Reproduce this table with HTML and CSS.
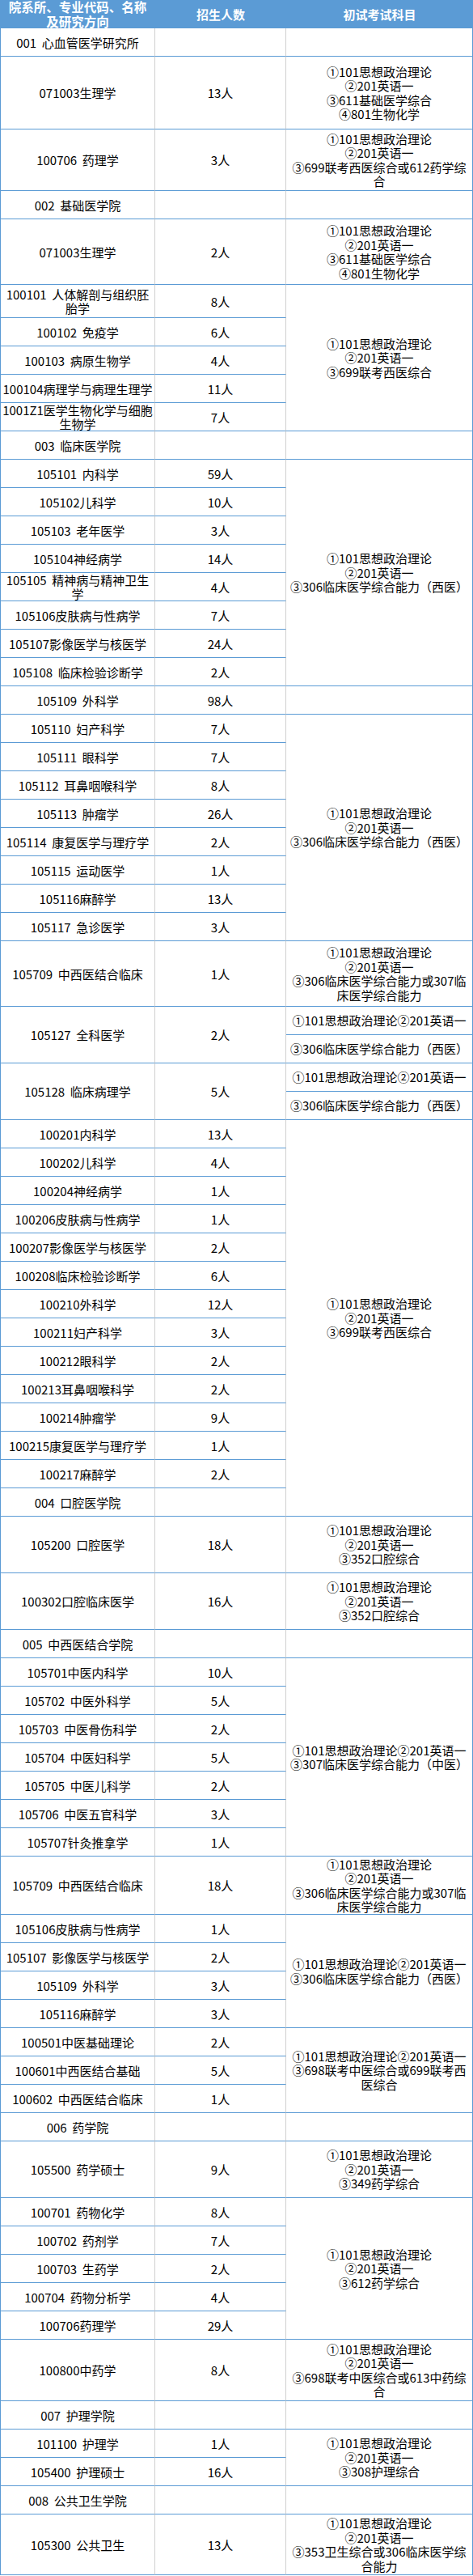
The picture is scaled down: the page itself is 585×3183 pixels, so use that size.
FILE: index.html
```html
<!DOCTYPE html>
<html lang="zh-CN">
<head>
<meta charset="utf-8">
<title>招生目录</title>
<link rel="stylesheet" href="styles.css">
</head>
<body>
<table class="t">
<colgroup><col class="w1"><col class="w2"><col class="w3"></colgroup>
<thead>
<tr class="hd"><th class="h1">院系所、专业代码、名称<br>及研究方向</th><th>招生人数</th><th class="h3">初试考试科目</th></tr>
</thead>
<tbody>
<tr class="r35"><td class="c1">001  心血管医学研究所</td><td class="c2"></td><td class="c3"></td></tr>
<tr class="r90"><td class="c1">071003生理学</td><td class="c2">13人</td><td class="c3">①101思想政治理论<br>②201英语一<br>③611基础医学综合<br>④801生物化学</td></tr>
<tr class="r76"><td class="c1">100706  药理学</td><td class="c2">3人</td><td class="c3">①101思想政治理论<br>②201英语一<br>③699联考西医综合或612药学综<br>合</td></tr>
<tr class="r35"><td class="c1">002  基础医学院</td><td class="c2"></td><td class="c3"></td></tr>
<tr class="r81"><td class="c1">071003生理学</td><td class="c2">2人</td><td class="c3">①101思想政治理论<br>②201英语一<br>③611基础医学综合<br>④801生物化学</td></tr>
<tr class="r41"><td class="c1">100101  人体解剖与组织胚<br>胎学</td><td class="c2">8人</td><td class="c3" rowspan="5">①101思想政治理论<br>②201英语一<br>③699联考西医综合</td></tr>
<tr class="r35"><td class="c1">100102  免疫学</td><td class="c2">6人</td></tr>
<tr class="r35"><td class="c1">100103  病原生物学</td><td class="c2">4人</td></tr>
<tr class="r35"><td class="c1">100104病理学与病理生理学</td><td class="c2">11人</td></tr>
<tr class="r35"><td class="c1">1001Z1医学生物化学与细胞<br>生物学</td><td class="c2">7人</td></tr>
<tr class="r35"><td class="c1">003  临床医学院</td><td class="c2"></td><td class="c3"></td></tr>
<tr class="r35"><td class="c1">105101  内科学</td><td class="c2">59人</td><td class="c3" rowspan="8">①101思想政治理论<br>②201英语一<br>③306临床医学综合能力（西医）</td></tr>
<tr class="r35"><td class="c1">105102儿科学</td><td class="c2">10人</td></tr>
<tr class="r35"><td class="c1">105103  老年医学</td><td class="c2">3人</td></tr>
<tr class="r35"><td class="c1">105104神经病学</td><td class="c2">14人</td></tr>
<tr class="r35"><td class="c1">105105  精神病与精神卫生<br>学</td><td class="c2">4人</td></tr>
<tr class="r35"><td class="c1">105106皮肤病与性病学</td><td class="c2">7人</td></tr>
<tr class="r35"><td class="c1">105107影像医学与核医学</td><td class="c2">24人</td></tr>
<tr class="r35"><td class="c1">105108  临床检验诊断学</td><td class="c2">2人</td></tr>
<tr class="r35"><td class="c1">105109  外科学</td><td class="c2">98人</td><td class="c3"></td></tr>
<tr class="r35"><td class="c1">105110  妇产科学</td><td class="c2">7人</td><td class="c3" rowspan="8">①101思想政治理论<br>②201英语一<br>③306临床医学综合能力（西医）</td></tr>
<tr class="r35"><td class="c1">105111  眼科学</td><td class="c2">7人</td></tr>
<tr class="r35"><td class="c1">105112  耳鼻咽喉科学</td><td class="c2">8人</td></tr>
<tr class="r35"><td class="c1">105113  肿瘤学</td><td class="c2">26人</td></tr>
<tr class="r35"><td class="c1">105114  康复医学与理疗学</td><td class="c2">2人</td></tr>
<tr class="r35"><td class="c1">105115  运动医学</td><td class="c2">1人</td></tr>
<tr class="r35"><td class="c1">105116麻醉学</td><td class="c2">13人</td></tr>
<tr class="r35"><td class="c1">105117  急诊医学</td><td class="c2">3人</td></tr>
<tr class="r81"><td class="c1">105709  中西医结合临床</td><td class="c2">1人</td><td class="c3">①101思想政治理论<br>②201英语一<br>③306临床医学综合能力或307临<br>床医学综合能力</td></tr>
<tr class="r35"><td class="c1" rowspan="2">105127  全科医学</td><td class="c2" rowspan="2">2人</td><td class="c3">①101思想政治理论②201英语一</td></tr>
<tr class="r35"><td class="c3">③306临床医学综合能力（西医）</td></tr>
<tr class="r35"><td class="c1" rowspan="2">105128  临床病理学</td><td class="c2" rowspan="2">5人</td><td class="c3">①101思想政治理论②201英语一</td></tr>
<tr class="r35"><td class="c3">③306临床医学综合能力（西医）</td></tr>
<tr class="r35"><td class="c1">100201内科学</td><td class="c2">13人</td><td class="c3" rowspan="14">①101思想政治理论<br>②201英语一<br>③699联考西医综合</td></tr>
<tr class="r35"><td class="c1">100202儿科学</td><td class="c2">4人</td></tr>
<tr class="r35"><td class="c1">100204神经病学</td><td class="c2">1人</td></tr>
<tr class="r35"><td class="c1">100206皮肤病与性病学</td><td class="c2">1人</td></tr>
<tr class="r35"><td class="c1">100207影像医学与核医学</td><td class="c2">2人</td></tr>
<tr class="r35"><td class="c1">100208临床检验诊断学</td><td class="c2">6人</td></tr>
<tr class="r35"><td class="c1">100210外科学</td><td class="c2">12人</td></tr>
<tr class="r35"><td class="c1">100211妇产科学</td><td class="c2">3人</td></tr>
<tr class="r35"><td class="c1">100212眼科学</td><td class="c2">2人</td></tr>
<tr class="r35"><td class="c1">100213耳鼻咽喉科学</td><td class="c2">2人</td></tr>
<tr class="r35"><td class="c1">100214肿瘤学</td><td class="c2">9人</td></tr>
<tr class="r35"><td class="c1">100215康复医学与理疗学</td><td class="c2">1人</td></tr>
<tr class="r35"><td class="c1">100217麻醉学</td><td class="c2">2人</td></tr>
<tr class="r35"><td class="c1">004  口腔医学院</td><td class="c2"></td></tr>
<tr class="r70"><td class="c1">105200  口腔医学</td><td class="c2">18人</td><td class="c3">①101思想政治理论<br>②201英语一<br>③352口腔综合</td></tr>
<tr class="r70"><td class="c1">100302口腔临床医学</td><td class="c2">16人</td><td class="c3">①101思想政治理论<br>②201英语一<br>③352口腔综合</td></tr>
<tr class="r35"><td class="c1">005  中西医结合学院</td><td class="c2"></td><td class="c3"></td></tr>
<tr class="r35"><td class="c1">105701中医内科学</td><td class="c2">10人</td><td class="c3" rowspan="7">①101思想政治理论②201英语一<br>③307临床医学综合能力（中医）</td></tr>
<tr class="r35"><td class="c1">105702  中医外科学</td><td class="c2">5人</td></tr>
<tr class="r35"><td class="c1">105703  中医骨伤科学</td><td class="c2">2人</td></tr>
<tr class="r35"><td class="c1">105704  中医妇科学</td><td class="c2">5人</td></tr>
<tr class="r35"><td class="c1">105705  中医儿科学</td><td class="c2">2人</td></tr>
<tr class="r35"><td class="c1">105706  中医五官科学</td><td class="c2">3人</td></tr>
<tr class="r35"><td class="c1">105707针灸推拿学</td><td class="c2">1人</td></tr>
<tr class="r72"><td class="c1">105709  中西医结合临床</td><td class="c2">18人</td><td class="c3">①101思想政治理论<br>②201英语一<br>③306临床医学综合能力或307临<br>床医学综合能力</td></tr>
<tr class="r35"><td class="c1">105106皮肤病与性病学</td><td class="c2">1人</td><td class="c3" rowspan="4">①101思想政治理论②201英语一<br>③306临床医学综合能力（西医）</td></tr>
<tr class="r35"><td class="c1">105107  影像医学与核医学</td><td class="c2">2人</td></tr>
<tr class="r35"><td class="c1">105109  外科学</td><td class="c2">3人</td></tr>
<tr class="r35"><td class="c1">105116麻醉学</td><td class="c2">3人</td></tr>
<tr class="r35"><td class="c1">100501中医基础理论</td><td class="c2">2人</td><td class="c3" rowspan="3">①101思想政治理论②201英语一<br>③698联考中医综合或699联考西<br>医综合</td></tr>
<tr class="r35"><td class="c1">100601中西医结合基础</td><td class="c2">5人</td></tr>
<tr class="r35"><td class="c1">100602  中西医结合临床</td><td class="c2">1人</td></tr>
<tr class="r35"><td class="c1">006  药学院</td><td class="c2"></td><td class="c3"></td></tr>
<tr class="r70"><td class="c1">105500  药学硕士</td><td class="c2">9人</td><td class="c3">①101思想政治理论<br>②201英语一<br>③349药学综合</td></tr>
<tr class="r35"><td class="c1">100701  药物化学</td><td class="c2">8人</td><td class="c3" rowspan="5">①101思想政治理论<br>②201英语一<br>③612药学综合</td></tr>
<tr class="r35"><td class="c1">100702  药剂学</td><td class="c2">7人</td></tr>
<tr class="r35"><td class="c1">100703  生药学</td><td class="c2">2人</td></tr>
<tr class="r35"><td class="c1">100704  药物分析学</td><td class="c2">4人</td></tr>
<tr class="r35"><td class="c1">100706药理学</td><td class="c2">29人</td></tr>
<tr class="r76"><td class="c1">100800中药学</td><td class="c2">8人</td><td class="c3">①101思想政治理论<br>②201英语一<br>③698联考中医综合或613中药综<br>合</td></tr>
<tr class="r35"><td class="c1">007  护理学院</td><td class="c2"></td><td class="c3"></td></tr>
<tr class="r35"><td class="c1">101100  护理学</td><td class="c2">1人</td><td class="c3" rowspan="2">①101思想政治理论<br>②201英语一<br>③308护理综合</td></tr>
<tr class="r35"><td class="c1">105400  护理硕士</td><td class="c2">16人</td></tr>
<tr class="r35"><td class="c1">008  公共卫生学院</td><td class="c2"></td><td class="c3"></td></tr>
<tr class="r75"><td class="c1">105300  公共卫生</td><td class="c2">13人</td><td class="c3">①101思想政治理论<br>②201英语一<br>③353卫生综合或306临床医学综<br>合能力</td></tr>
</tbody>
</table>
</body>
</html>
```

FILE: styles.css
```css
html, body {
  margin: 0;
  padding: 0;
  background: #ffffff;
}

body {
  font-family: "Noto Sans CJK SC", "Noto Sans", sans-serif;
  color: #000000;
}

.t {
  width: 585px;
  table-layout: fixed;
  border-collapse: separate;
  border-spacing: 0;
}

.w1 { width: 192px; }
.w2 { width: 162px; }
.w3 { width: 231px; }

.hd {
  height: 35px;
}

.hd th {
  background: #5b9bd5;
  color: #ffffff;
  font-size: 15px;
  font-weight: bold;
  line-height: 17.5px;
  padding: 0;
  text-align: center;
  vertical-align: middle;
  white-space: nowrap;
}

.hd th.h1 {
  font-size: 15.5px;
}

.t td {
  padding: 0;
  text-align: center;
  vertical-align: middle;
  white-space: nowrap;
  font-size: 15px;
  line-height: 17px;
  border-bottom: 1px solid #5b9bd5;
  border-right: 1px solid #d0d0d0;
}

.t td.c1 {
  white-space: pre;
  border-left: 1px solid #5b9bd5;
}

.t td.c3 {
  line-height: 17.5px;
  border-right: 1px solid #5b9bd5;
}

.r35 { height: 35px; }
.r41 { height: 41px; }
.r70 { height: 70px; }
.r72 { height: 72px; }
.r75 { height: 75px; }
.r76 { height: 76px; }
.r81 { height: 81px; }
.r90 { height: 90px; }
```
